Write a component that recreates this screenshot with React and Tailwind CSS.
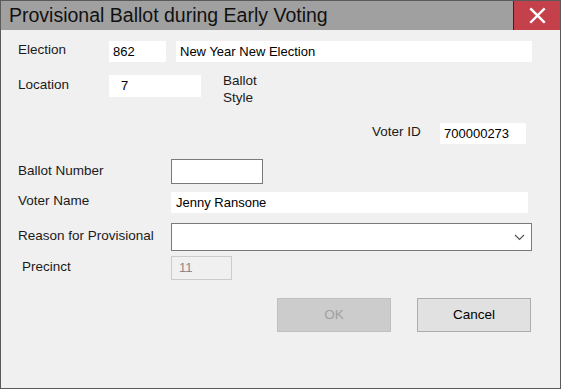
import React from "react";

const font = { fontFamily: '"Liberation Sans", Arial, sans-serif' };

function Box({ className = "", children }) {
  return (
    <div className={"flex items-center bg-white text-[13px] text-black " + className}>
      {children}
    </div>
  );
}

export default function App() {
  return (
    <div
      style={font}
      className="w-[561px] h-[389px] border border-[#5a5a5a] bg-[#f0f0f0] flex flex-col text-[13.5px] text-[#1a1a1a] overflow-hidden"
    >
      {/* Title bar */}
      <div className="h-[29px] bg-[#a0a0a0] flex items-stretch shrink-0">
        <div className="flex-1 flex items-center pl-[8px] text-[19.5px] text-[#111] leading-none pt-[1px]">
          Provisional Ballot during Early Voting
        </div>
        <div className="w-[47px] border-l border-[#2a2a2a] bg-[#c4404b] flex items-center justify-center">
          <svg width="17" height="17" viewBox="0 0 16 16">
            <path d="M2 2 L14 14 M14 2 L2 14" stroke="#fff" strokeWidth="2.3" strokeLinecap="square" />
          </svg>
        </div>
      </div>

      {/* Body */}
      <div className="flex flex-col">
        {/* Election */}
        <div className="flex items-center h-[21px] mt-[11px]">
          <div className="w-[108px] pl-[17px] -mt-[2px]">Election</div>
          <Box className="w-[57px] h-[21px] pl-[4px]">862</Box>
          <Box className="w-[356px] h-[21px] ml-[10px] pl-[4px]">New Year New Election</Box>
        </div>

        {/* Location */}
        <div className="flex items-start h-[22px] mt-[13px]">
          <div className="w-[108px] pl-[17px] h-[22px] flex items-center -mt-[1px]">Location</div>
          <Box className="w-[92px] h-[22px] pl-[12px]">7</Box>
          <div className="ml-[22px] leading-[17px] -mt-[3px]">
            <div>Ballot</div>
            <div>Style</div>
          </div>
        </div>

        {/* Voter ID */}
        <div className="flex items-center h-[21px] mt-[26px]">
          <div className="ml-[371px] w-[68px] -mt-[2px]">Voter ID</div>
          <Box className="w-[86px] h-[21px] pl-[4px]">700000273</Box>
        </div>

        {/* Ballot Number */}
        <div className="flex items-center h-[25px] mt-[15px]">
          <div className="w-[170px] pl-[17px] -mt-[1px]">Ballot Number</div>
          <div className="w-[92px] h-[25px] bg-white border border-[#7a7a7a]" />
        </div>

        {/* Voter Name */}
        <div className="flex items-center h-[21px] mt-[8px]">
          <div className="w-[170px] pl-[17px] -mt-[2px]">Voter Name</div>
          <Box className="w-[357px] h-[21px] pl-[5px]">Jenny Ransone</Box>
        </div>

        {/* Reason */}
        <div className="flex items-center h-[28px] mt-[10px]">
          <div className="w-[170px] pl-[17px] -mt-[1px]">Reason for Provisional</div>
          <div className="w-[361px] h-[28px] bg-white border border-[#7a7a7a] flex items-center justify-end pr-[6px]">
            <svg width="11" height="7" viewBox="0 0 11 7">
              <path d="M1 1 L5.5 5.5 L10 1" stroke="#555" strokeWidth="1.2" fill="none" />
            </svg>
          </div>
        </div>

        {/* Precinct */}
        <div className="flex items-center h-[24px] mt-[5px]">
          <div className="w-[170px] pl-[21px] -mt-[1px]">Precinct</div>
          <div className="w-[61px] h-[24px] border border-[#cccccc] bg-[#f0f0f0] flex items-center pl-[7px] text-[13px] text-[#8a8a8a]">
            11
          </div>
        </div>

        {/* Buttons */}
        <div className="flex items-center h-[34px] mt-[18px]">
          <div className="ml-[276px] w-[114px] h-[34px] bg-[#cccccc] border border-[#bfbfbf] flex items-center justify-center text-[#a0a0a0]">
            OK
          </div>
          <div className="ml-[26px] w-[114px] h-[34px] bg-[#e1e1e1] border border-[#adadad] flex items-center justify-center text-black">
            Cancel
          </div>
        </div>
      </div>
    </div>
  );
}
